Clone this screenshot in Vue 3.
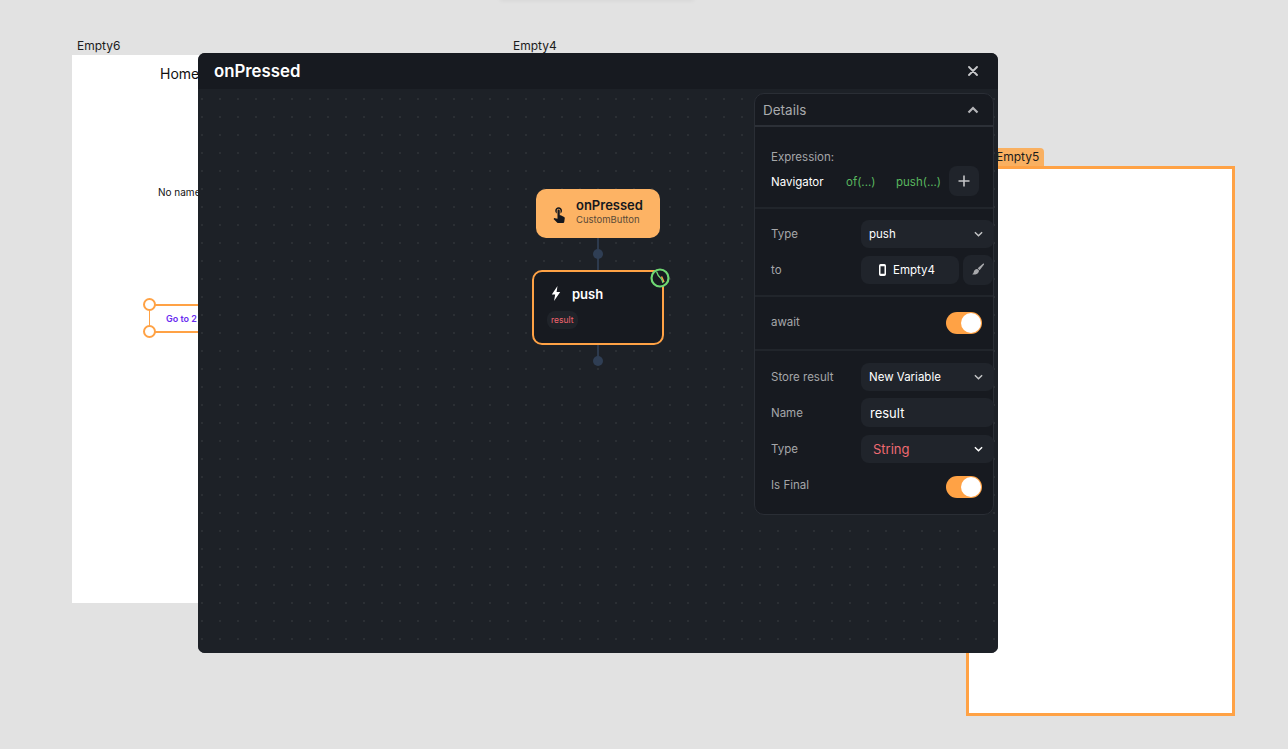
<script setup>
const dots = ['of(...)', 'push(...)']
</script>

<template>
  <div class="canvas">
    <div class="top-shadow"></div>

    <div class="board-label label-six">Empty6</div>
    <div class="board board-six">
      <div class="home">Home</div>
      <div class="no-name">No name</div>
      <div class="selected-btn">
        <span class="go-text">Go to 2</span>
        <i class="handle handle-top"></i>
        <i class="handle handle-bottom"></i>
      </div>
    </div>

    <div class="board-label label-four">Empty4</div>

    <div class="tag-five">Empty5</div>
    <div class="board board-five"></div>

    <div class="modal">
      <header class="modal-head">
        <span class="modal-title">onPressed</span>
        <svg class="close" width="10" height="10" viewBox="0 0 10 10">
          <path d="M1 1l8 8M9 1l-8 8" stroke="#c9cacc" stroke-width="1.800" stroke-linecap="round" />
        </svg>
      </header>

      <div class="graph">
        <div class="connector conn-one"></div>
        <div class="knob knob-one"></div>
        <div class="connector conn-two"></div>
        <div class="knob knob-two"></div>

        <div class="node-start">
          <svg width="18" height="18" viewBox="0 0 24 24">
            <path d="M9 11.240V7.500C9 6.120 10.120 5 11.500 5S14 6.120 14 7.500v3.740c1.210-.81 2-2.180 2-3.740C16 5.010 13.990 3 11.500 3S7 5.010 7 7.500c0 1.560.79 2.930 2 3.740zm9.840 4.630l-4.540-2.260c-.17-.07-.35-.11-.54-.11H13v-6c0-.83-.67-1.500-1.500-1.500S10 6.670 10 7.500v10.740l-3.430-.72c-.08-.01-.15-.03-.24-.03-.31 0-.59.130-.79.330l-.79.800 4.940 4.940c.27.270.65.440 1.060.440h6.790c.75 0 1.330-.55 1.440-1.280l.75-5.270c.01-.07.02-.14.02-.20 0-.62-.38-1.160-.91-1.380z" fill="#15181e" />
          </svg>
          <div class="start-text">
            <div class="start-name">onPressed</div>
            <div class="start-sub">CustomButton</div>
          </div>
        </div>

        <div class="node-push">
          <div class="push-row">
            <svg width="10" height="15" viewBox="0 0 10 15">
              <path d="M6.500 0L0.800 8.500h3.400L3 15l6.200-9H5.600z" fill="#fff" />
            </svg>
            <span class="push-name">push</span>
          </div>
          <span class="result-chip">result</span>
          <div class="clock">
            <svg width="20" height="20" viewBox="0 0 20 20">
              <circle cx="10" cy="10" r="8.500" fill="#171a21" stroke="#6fd873" stroke-width="2.200" />
              <path d="M11.500 8.500L14 14" fill="none" stroke="#ffa245" stroke-width="1.500" />
              <path d="M6.500 3.500C7.500 7 9 9 11 10.500c1 1 1.500 2.500 2 4.500" fill="none" stroke="#6fd873" stroke-width="1.300" />
            </svg>
          </div>
        </div>

        <aside class="details">
          <div class="details-head">
            <span>Details</span>
            <svg width="12" height="8" viewBox="0 0 12 8">
              <path d="M1.500 6.500L6 2l4.500 4.500" fill="none" stroke="#b4b5b8" stroke-width="2.200" />
            </svg>
          </div>

          <section class="sec sec-expr">
            <div class="field-label">Expression:</div>
            <div class="expr-row">
              <span class="expr-root">Navigator</span>
              <span v-for="d in dots" :key="d" class="expr-call">{{ d }}</span>
              <button class="plus-btn">
                <svg width="12" height="12" viewBox="0 0 12 12">
                  <path d="M6 .5v11M.5 6h11" stroke="#c4c5c7" stroke-width="1.600" />
                </svg>
              </button>
            </div>
          </section>

          <section class="sec sec-type">
            <div class="row">
              <span class="field-label">Type</span>
              <div class="select">
                <span>push</span>
                <svg class="chev" width="9" height="6" viewBox="0 0 10 6"><path d="M1 1l4 4 4-4" fill="none" stroke="#c4c5c7" stroke-width="1.600" /></svg>
              </div>
            </div>
            <div class="row">
              <span class="field-label">to</span>
              <div class="target">
                <svg width="7" height="12" viewBox="0 0 7 12">
                  <rect x="0.750" y="0.750" width="5.500" height="10.500" rx="1" fill="none" stroke="#fff" stroke-width="1.500" />
                  <path d="M1 1.500h5M1 10.500h5" stroke="#fff" stroke-width="1.500" />
                </svg>
                <span>Empty4</span>
              </div>
              <button class="brush-btn">
                <svg width="14" height="14" viewBox="0 0 14 14">
                  <path d="M12.200.6c.5-.3 1.100.3.8.8L8.600 7.200 6.700 5.300z" fill="#a8a9ac" />
                  <path d="M5.900 6c1.200.2 2 1 2.100 2.100-.3 1.500-1.300 2.700-2.900 3.200-1.300.4-2.800.4-4 0 1.100-.6 1.500-1.500 1.700-2.600.2-1.300 1.500-2.500 3.100-2.700z" fill="#a8a9ac" />
                </svg>
              </button>
            </div>
          </section>

          <section class="sec sec-await">
            <span class="field-label raised">await</span>
            <span class="toggle"><i></i></span>
          </section>

          <section class="sec-store">
            <div class="row">
              <span class="field-label">Store result</span>
              <div class="select">
                <span>New Variable</span>
                <svg class="chev" width="9" height="6" viewBox="0 0 10 6"><path d="M1 1l4 4 4-4" fill="none" stroke="#c4c5c7" stroke-width="1.600" /></svg>
              </div>
            </div>
            <div class="row row-name">
              <span class="field-label">Name</span>
              <div class="input">result</div>
            </div>
            <div class="row">
              <span class="field-label">Type</span>
              <div class="select select-string">
                <span>String</span>
                <svg class="chev" width="9" height="6" viewBox="0 0 10 6"><path d="M1 1l4 4 4-4" fill="none" stroke="#fff" stroke-width="1.600" /></svg>
              </div>
            </div>
            <div class="row row-final">
              <span class="field-label final-label">Is Final</span>
              <span class="toggle"><i></i></span>
            </div>
          </section>
        </aside>
      </div>
    </div>
  </div>
</template>

<style>
html, body {
  margin: 0;
  background: #e2e2e2;
}
</style>

<style scoped>
.canvas {
  position: relative;
  width: 1288px;
  height: 749px;
  overflow: hidden;
  background: #e2e2e2;
  font-family: Inter, "Liberation Sans", sans-serif;
}
.top-shadow {
  position: absolute;
  left: 500px;
  top: -6px;
  width: 194px;
  height: 6px;
  box-shadow: 0 1px 4px rgba(0, 0, 0, 0.05);
}
.board-label {
  position: absolute;
  top: 38px;
  font-size: 12px;
  line-height: 15px;
  color: #1c1c1c;
}
.label-six { left: 77px; }
.label-four { left: 513px; }
.board {
  position: absolute;
  background: #fff;
}
.board-six {
  left: 72px;
  top: 55px;
  width: 260px;
  height: 548px;
}
.home {
  position: absolute;
  left: 88px;
  top: 10px;
  font-size: 14px;
  line-height: 18px;
  color: #111;
}
.no-name {
  position: absolute;
  left: 86px;
  top: 130px;
  font-size: 10px;
  line-height: 14px;
  color: #111;
}
.selected-btn {
  position: absolute;
  left: 77px;
  top: 249px;
  width: 120px;
  height: 29px;
  border: 2px solid #ffa245;
  border-left-width: 1px;
  border-right-width: 1px;
  box-sizing: border-box;
}
.go-text {
  position: absolute;
  left: 16px;
  top: 6px;
  font-size: 9px;
  line-height: 13px;
  font-weight: 600;
  color: #6a2cf0;
  white-space: nowrap;
}
.handle {
  position: absolute;
  left: -7px;
  width: 13px;
  height: 13px;
  box-sizing: border-box;
  border: 2px solid #ffa245;
  border-radius: 50%;
  background: #fff;
}
.handle-top { top: -8px; }
.handle-bottom { bottom: -7px; }
.tag-five {
  position: absolute;
  left: 980px;
  top: 148px;
  width: 64px;
  height: 18px;
  box-sizing: border-box;
  padding-left: 16px;
  border-radius: 0 4px 0 0;
  background: #f9b061;
  font-size: 12px;
  line-height: 18px;
  color: #1c1c1c;
  white-space: nowrap;
}
.board-five {
  left: 966px;
  top: 166px;
  width: 269px;
  height: 550px;
  box-sizing: border-box;
  border: 3px solid #ffa245;
}
.modal {
  position: absolute;
  left: 198px;
  top: 53px;
  width: 800px;
  height: 600px;
  display: flex;
  flex-direction: column;
  border-radius: 7px;
  overflow: hidden;
  background: #1d2127;
}
.modal-head {
  flex: 0 0 36px;
  display: flex;
  align-items: center;
  justify-content: space-between;
  padding: 0 20px 0 16px;
  background: #171a20;
}
.modal-title {
  font-size: 16.800px;
  font-weight: 600;
  color: #fff;
}
.graph {
  position: relative;
  flex: 1;
  background-color: #1d2127;
  background-image: radial-gradient(circle at 1px 1px, #2b2f34 1px, transparent 1.200px);
  background-size: 18px 18px;
  background-position: 3px 9px;
}
.connector {
  position: absolute;
  left: 399px;
  width: 2px;
  background: #2d3a4d;
}
.conn-one { top: 149px; height: 32px; }
.conn-two { top: 256px; height: 14px; }
.knob {
  position: absolute;
  left: 395px;
  width: 10px;
  height: 10px;
  border-radius: 50%;
  background: #2f3e54;
}
.knob-one { top: 160px; }
.knob-two { top: 267px; }
.node-start {
  position: absolute;
  left: 338px;
  top: 100px;
  width: 124px;
  height: 49px;
  box-sizing: border-box;
  padding-left: 14px;
  display: flex;
  align-items: center;
  gap: 8px;
  border-radius: 10px;
  background: #fdb364;
}
.start-text {
  margin-top: -3px;
}
.start-name {
  font-size: 13px;
  line-height: 15px;
  font-weight: 600;
  color: #15181e;
}
.start-sub {
  font-size: 9.500px;
  line-height: 13px;
  color: #5a4a38;
}
.node-push {
  position: absolute;
  left: 334px;
  top: 181px;
  width: 132px;
  height: 75px;
  box-sizing: border-box;
  padding: 14px 0 0 17px;
  border: 2px solid #ffa245;
  border-radius: 10px;
  background: #171a20;
}
.push-row {
  display: flex;
  align-items: center;
  gap: 11px;
  height: 15px;
}
.push-name {
  font-size: 13px;
  font-weight: 600;
  color: #fff;
}
.result-chip {
  display: inline-block;
  margin: 10px 0 0 -4px;
  padding: 0 4px;
  border-radius: 8px;
  background: #1f2329;
  font-size: 8.500px;
  line-height: 18px;
  color: #f0646e;
}
.clock {
  position: absolute;
  right: -8px;
  top: -4px;
  width: 20px;
  height: 20px;
}
.details {
  position: absolute;
  left: 556px;
  top: 4px;
  width: 240px;
  height: 422px;
  box-sizing: border-box;
  border: 1px solid #2a2e35;
  border-radius: 10px;
  background: #171a20;
}
.details-head {
  box-sizing: border-box;
  height: 33px;
  display: flex;
  align-items: center;
  justify-content: space-between;
  padding: 0 14px 0 8px;
  border-bottom: 2px solid #2c3037;
  font-size: 13.500px;
  color: #a9aaad;
}
.field-label {
  font-size: 11.500px;
  color: #a5a6a9;
}
.sec {
  box-sizing: border-box;
  border-bottom: 2px solid #21252b;
  padding-left: 16px;
}
.sec-expr {
  height: 82px;
  padding-top: 23px;
}
.expr-row {
  position: relative;
  display: flex;
  align-items: center;
  height: 30px;
  margin-top: 2px;
  padding-top: 1px;
  box-sizing: border-box;
  font-size: 11.500px;
}
.expr-root {
  width: 75px;
  color: #fff;
}
.expr-call {
  width: 50px;
  color: #59b75f;
}
.plus-btn {
  position: absolute;
  left: 178px;
  top: 0;
  width: 30px;
  height: 30px;
  padding: 0;
  display: flex;
  align-items: center;
  justify-content: center;
  border: 0;
  border-radius: 8px;
  background: #20242b;
}
.sec-type {
  height: 88px;
  padding-top: 11px;
  display: flex;
  flex-direction: column;
  gap: 8px;
}
.row {
  display: flex;
  align-items: center;
  height: 28px;
}
.row > .field-label {
  flex: 0 0 90px;
}
.select, .input, .target {
  box-sizing: border-box;
  height: 28px;
  display: flex;
  align-items: center;
  border-radius: 8px;
  background: #20242b;
  color: #fff;
  font-size: 11.500px;
}
.select {
  flex: 0 0 133px;
  justify-content: space-between;
  padding: 0 11px 0 8px;
}
.select-string {
  padding-left: 12px;
  font-size: 13px;
  color: #ef6a72;
}
.input {
  flex: 0 0 133px;
  height: 29px;
  padding-left: 9px;
  font-size: 13px;
}
.target {
  flex: 0 0 98px;
  padding-left: 18px;
  gap: 7px;
}
.brush-btn {
  flex: 0 0 30px;
  height: 30px;
  margin-left: 4px;
  padding: 0;
  display: flex;
  align-items: center;
  justify-content: center;
  border: 0;
  border-radius: 8px;
  background: #20242b;
}
.sec-await {
  height: 54px;
  display: flex;
  align-items: center;
  justify-content: space-between;
  padding-right: 11px;
}
.raised {
  margin-top: -2px;
}
.toggle {
  position: relative;
  display: block;
  width: 36px;
  height: 22px;
  border-radius: 11px;
  background: #ffa245;
}
.toggle i {
  position: absolute;
  right: 1px;
  top: 1px;
  width: 20px;
  height: 20px;
  border-radius: 50%;
  background: #fff;
}
.sec-store {
  padding: 12px 0 0 16px;
  display: flex;
  flex-direction: column;
  gap: 7px;
}
.row-name {
  height: 29px;
  margin-bottom: 1px;
}
.row-final {
  margin-top: 3px;
  justify-content: space-between;
  padding-right: 11px;
}
.row-final > .final-label {
  flex: 0 0 auto;
  margin-top: -4px;
}
</style>
